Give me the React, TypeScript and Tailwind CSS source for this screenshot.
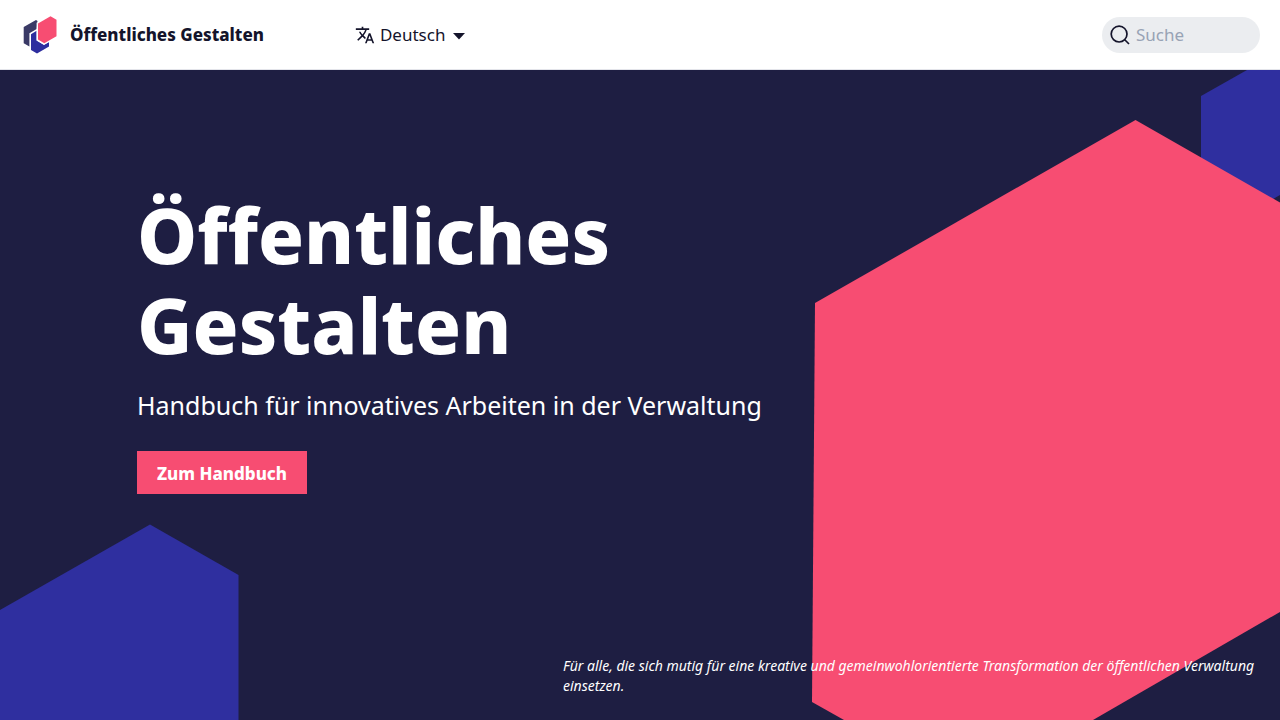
import React from "react";

function Logo() {
  return (
    <svg className="h-[38px] w-[34px]" viewBox="23 16 34 38" aria-hidden="true">
      <path fill="#3a3a66" d="M23.7 27 36 20.1 37.5 21 37.3 22.4 36.7 29 29.4 33.3V46.4L23.7 43.2Z" />
      <path fill="#2e2e9f" d="M31 34.2 36.6 30.8V40.6L44 44.8 49 42V46.6L37 53.5 31 50Z" />
      <path fill="#fff" d="M36.6 22.8 37.8 22V39.7L44.2 43.6 49 41V42L44 44.9 36.6 40.6Z" />
      <path fill="#f74d72" d="M50.5 16.2 56.5 19.8V36.2L44.3 43.2 38 39.5V23.6Z" />
    </svg>
  );
}

function TranslateIcon() {
  return (
    <svg className="size-5" viewBox="0 0 24 24" fill="currentColor" aria-hidden="true">
      <path d="M12.87 15.07l-2.54-2.51.03-.03c1.74-1.94 2.98-4.17 3.71-6.53H17V4h-7V2H8v2H1v1.99h11.17C11.5 7.92 10.44 9.75 9 11.35 8.07 10.32 7.3 9.19 6.69 8h-2c.73 1.63 1.73 3.17 2.98 4.56l-5.09 5.02L4 19l5-5 3.11 3.11.76-2.04zM18.5 10h-2L12 22h2l1.12-3h4.75L21 22h2l-4.5-12zm-2.62 7l1.62-4.33L19.12 17h-3.24z" />
    </svg>
  );
}

function Header() {
  return (
    <header className="flex h-[70px] items-center justify-between border-b border-[#e3e4ea] bg-white pr-5 pl-[23px]">
      <div className="flex items-center gap-[91px]">
        <a href="#" className="flex items-center gap-[13px] text-[17px] leading-6 font-extrabold">
          <Logo />
          Öffentliches Gestalten
        </a>
        <button type="button" className="flex items-center text-[17px] leading-6">
          <TranslateIcon />
          <span className="ml-[5px]">Deutsch</span>
          <svg className="mt-1 ml-2 h-[7px] w-3" viewBox="0 0 12 7" fill="currentColor" aria-hidden="true">
            <path d="M0 0h12L6 6.5Z" />
          </svg>
        </button>
      </div>
      <label className="flex h-9 w-[158px] items-center rounded-full bg-[#ebedf0] pl-2">
        <svg className="size-5 shrink-0" viewBox="0 0 20 20" fill="none" stroke="currentColor" strokeWidth="1.7" aria-hidden="true">
          <path d="M15 15l4 4M17 9.1a7.9 7.9 0 1 1-15.8 0 7.9 7.9 0 0 1 15.8 0Z" />
        </svg>
        <input
          type="search"
          aria-label="Suche"
          placeholder="Suche"
          className="ml-1.5 min-w-0 flex-1 bg-transparent text-[17px] leading-6 outline-none placeholder:text-[#98a3b5]"
        />
      </label>
    </header>
  );
}

function Hexagons() {
  return (
    <svg
      className="absolute inset-0 h-full w-full"
      viewBox="0 0 1280 650"
      preserveAspectRatio="xMidYMid slice"
      aria-hidden="true"
    >
      <path fill="#2f2f9f" d="M1201 26 1247 0H1280V125L1240 148 1201 126Z" />
      <path fill="#2f2f9f" d="M0 540 150 454.5 238.5 505V650H0Z" />
      <path fill="#f74d72" d="M815 233 1135.5 50 1280 132.5V542L1093 650H844L812 632Z" />
    </svg>
  );
}

export default function App() {
  return (
    <div className="flex min-h-screen flex-col bg-white font-['Noto_Sans',sans-serif] text-[#14142b]">
      <Header />
      <main className="relative flex flex-1 flex-col justify-between overflow-hidden bg-[#1e1e42] text-white">
        <Hexagons />
        <section className="relative pt-[120px] pl-[137px]">
          <h1 className="max-w-[640px] text-[76px] leading-[90px] font-extrabold">
            Öffentliches
            <br />
            Gestalten
          </h1>
          <p className="mt-[17px] text-[25px] leading-9">
            Handbuch für innovatives Arbeiten in der Verwaltung
          </p>
          <a
            href="#"
            className="mt-7 inline-flex h-[43px] w-[170px] items-center justify-center bg-[#f74d72] pt-[3px] text-[17px] leading-6 font-extrabold"
          >
            Zum Handbuch
          </a>
        </section>
        <p className="relative mr-[23px] mb-6 ml-auto w-[694px] text-sm leading-5 italic">
          Für alle, die sich mutig für eine kreative und gemeinwohlorientierte Transformation der öffentlichen Verwaltung
          einsetzen.
        </p>
      </main>
    </div>
  );
}
